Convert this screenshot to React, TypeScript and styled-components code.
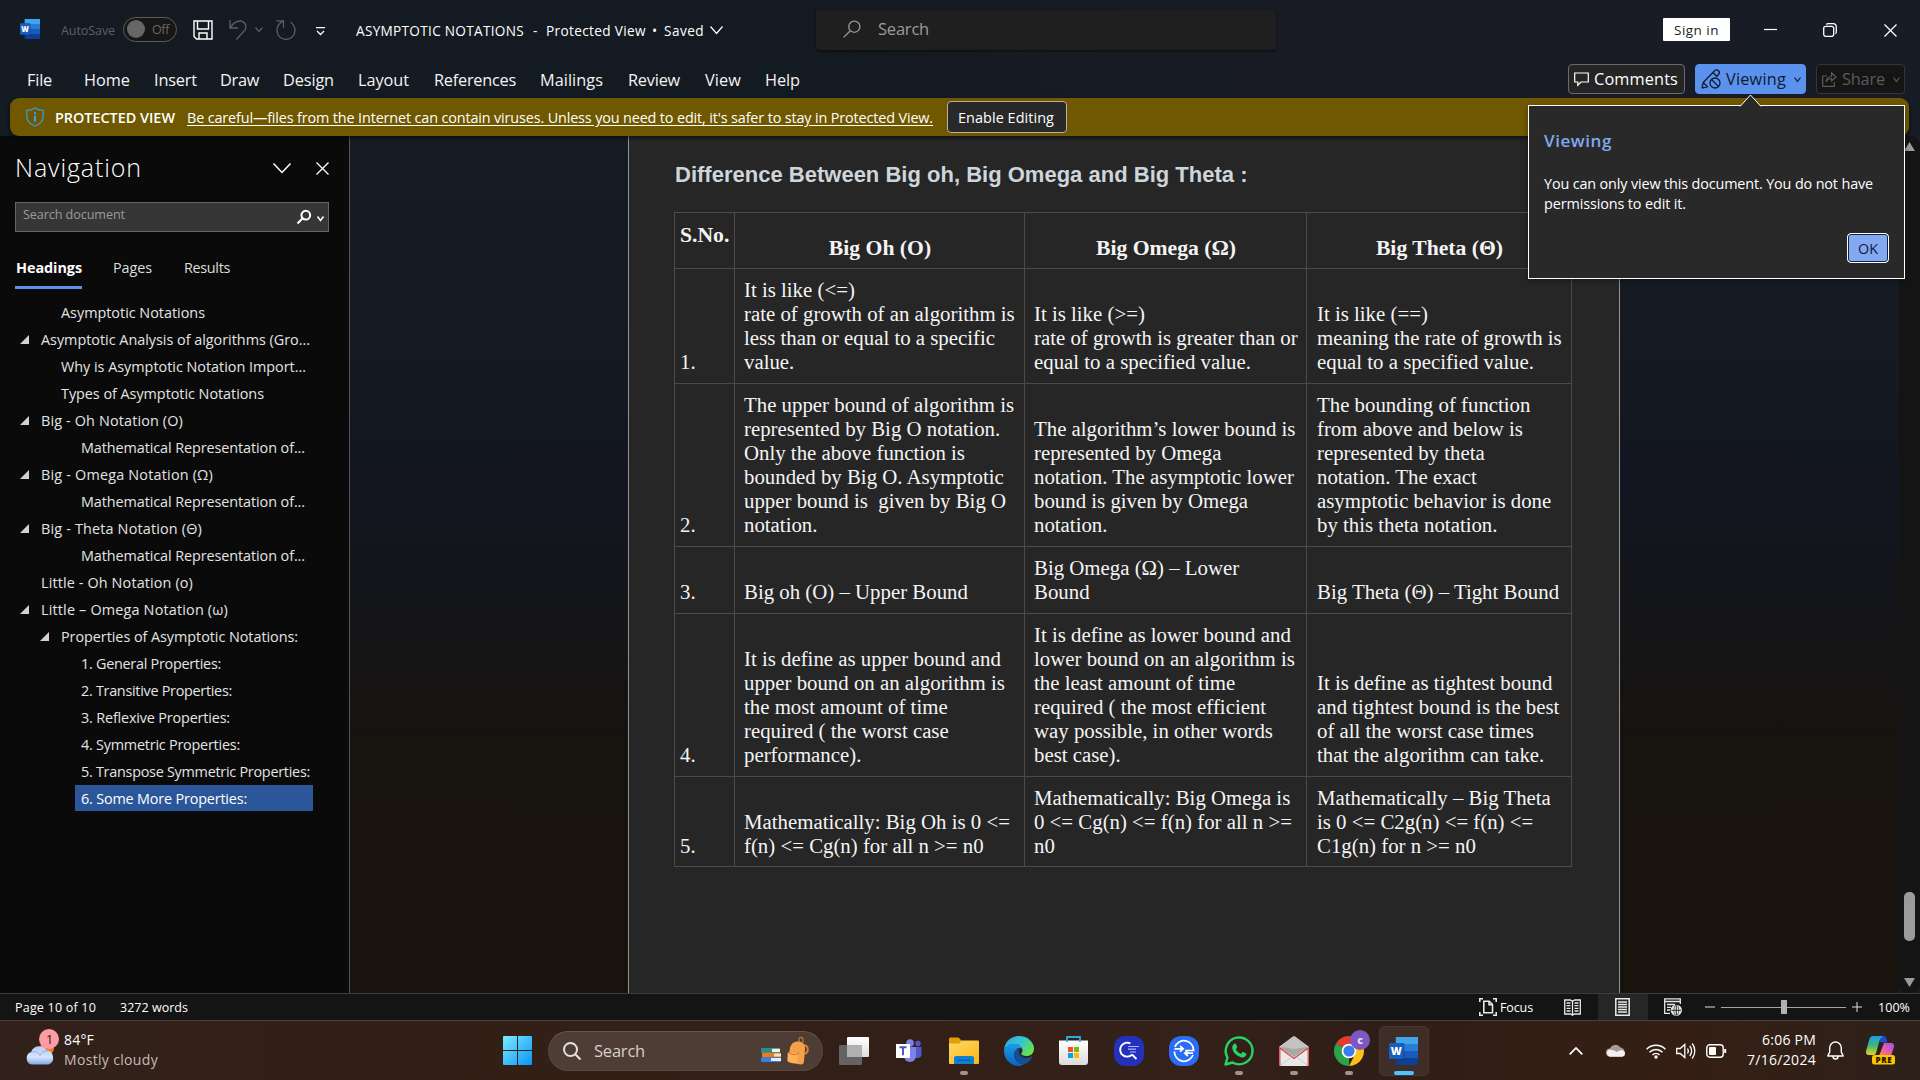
import React, { useLayoutEffect, useRef, useState } from "react";
import styled, { createGlobalStyle, css } from "styled-components";

const UI = `"Open Sans", "Noto Sans", sans-serif`;

const GlobalStyle = createGlobalStyle`
  * { box-sizing: border-box; }
  html, body { margin: 0; padding: 0; background: #14181f; overflow: hidden; }
  body { font-family: ${UI}; color: #fff; }
  svg { display: block; flex: none; overflow: visible; }
`;

/* ---------- text that tracks itself to a given measure ---------- */

const Measure = styled.span<{ $w: number }>`
  display: inline-block;
  flex: none;
  width: ${(p) => p.$w}px;
  white-space: pre;
  text-decoration: inherit;
  text-underline-offset: inherit;
`;

function Label({ w, children }: { w: number; children: string }) {
  const ref = useRef<HTMLSpanElement>(null);
  const [spacing, setSpacing] = useState(0);
  useLayoutEffect(() => {
    if (ref.current) {
      const natural = ref.current.getBoundingClientRect().width;
      setSpacing((w - natural) / children.length);
    }
  }, [w, children]);
  return (
    <Measure $w={w}>
      <span ref={ref} style={{ letterSpacing: spacing }}>{children}</span>
    </Measure>
  );
}

/* ---------- frame ---------- */

const Screen = styled.div`
  width: 1920px;
  height: 1080px;
  display: flex;
  flex-direction: column;
  overflow: hidden;
  background: linear-gradient(90deg, #141b22 0%, #141a22 40%, #191c25 70%, #181c26 100%);
`;

const TitleBar = styled.header`
  height: 58px;
  flex: none;
  display: flex;
  align-items: center;
  padding: 0 0 0 20px;
`;

const Before = styled.div<{ $gap: number; $down?: number }>`
  display: flex;
  align-items: center;
  flex: none;
  margin-left: ${(p) => p.$gap}px;
  padding-top: ${(p) => p.$down ?? 0}px;
`;

const AutoSave = styled.div`
  margin-left: 21px;
  padding-top: 2px;
  font-size: 12.5px;
  color: #5d6063;
  flex: none;
`;

const Toggle = styled.div`
  margin-left: 8px;
  width: 54px;
  height: 25px;
  border: 1px solid #5a5a5a;
  border-radius: 13px;
  background: #171717;
  display: flex;
  align-items: center;
  justify-content: space-between;
  padding: 0 7px 0 3px;
  font-size: 12.5px;
  color: #696969;
  flex: none;
  i { width: 18px; height: 18px; border-radius: 50%; background: #666; }
`;

const DocTitle = styled.div`
  display: flex;
  align-items: center;
  margin-left: 31px;
  padding-top: 2px;
  font-size: 13.6px;
  flex: none;
`;

const SearchBox = styled.div`
  margin-left: 93px;
  margin-top: 1px;
  width: 460px;
  height: 40px;
  border-radius: 4px;
  background: #1f1f1f;
  box-shadow: 0 1px 3px rgba(0, 0, 0, 0.6);
  display: flex;
  align-items: center;
  gap: 17px;
  padding: 0 0 2px 27px;
  font-size: 16.5px;
  color: #9b9b9b;
  flex: none;
`;

const SignIn = styled.div`
  margin-left: 387px;
  margin-top: 1px;
  width: 67px;
  height: 23px;
  background: #fff;
  border-radius: 1px;
  color: #222;
  display: flex;
  align-items: center;
  justify-content: center;
  font-size: 13.5px;
  line-height: 23px;
  padding-top: 1px;
  flex: none;
`;

const RibbonTabs = styled.nav`
  height: 40px;
  flex: none;
  display: flex;
  align-items: flex-start;
  padding-left: 27px;
`;

const Tab = styled.div<{ $w: number }>`
  width: ${(p) => p.$w}px;
  padding-top: 10px;
  line-height: 24px;
  font-size: 16.3px;
  color: #f4f4f4;
`;

const RibbonButtons = styled.div`
  margin-left: auto;
  margin-right: 15px;
  display: flex;
  gap: 10px;
  padding-top: 6px;
`;

const RibbonButton = styled.div<{ $w: number; $kind: "plain" | "active" | "off" }>`
  width: ${(p) => p.$w}px;
  height: 30px;
  border-radius: 4px;
  display: flex;
  align-items: center;
  font-size: 16.3px;
  padding: 0 0 0 5px;
  gap: 5px;
  ${(p) =>
    p.$kind === "plain"
      ? css`border: 1px solid #6b6b6b; background: #252525; color: #fff; font-weight: 500;`
      : p.$kind === "active"
        ? css`border: 1px solid #5b92ee; background: #5b92ee; color: #0e1a2e;`
        : css`border: 1px solid #353535; background: #151515; color: #5b5b5b;`}
`;

const Banner = styled.div`
  margin: 0 11px 0 10px;
  height: 38px;
  flex: none;
  border-radius: 9px;
  background: #6f5800;
  display: flex;
  align-items: center;
  padding-left: 16px;
  position: relative;
  box-shadow: 0 2px 4px rgba(0, 0, 0, 0.6);
  font-size: 14.4px;
`;

const BannerTitle = styled.div`
  margin-left: 11px;
  font-weight: 600;
  flex: none;
`;

const BannerLink = styled.div`
  margin-left: 12px;
  flex: none;
  text-decoration: underline;
  text-underline-offset: 2px;
`;

const EnableButton = styled.div`
  margin-left: 14px;
  width: 120px;
  height: 32px;
  border: 1px solid #b5b0a2;
  border-radius: 4px;
  background: #292929;
  display: flex;
  align-items: center;
  justify-content: center;
  padding-right: 2px;
  flex: none;
`;

/* ---------- body ---------- */

const Body = styled.main`
  height: 857px;
  flex: none;
  display: flex;
`;

const NavPane = styled.aside`
  width: 350px;
  background: #0a0a0a;
  border-right: 1px solid #55565a;
  flex: none;
`;

const NavHeader = styled.div`
  height: 66px;
  display: flex;
  padding: 0 0 2px 15px;
  align-items: center;
  font-size: 25px;
  font-weight: 300;
  line-height: 40px;
`;

const NavTitle = styled.div`
  padding-bottom: 2px;
`;

const NavSearch = styled.div`
  margin-left: 15px;
  width: 314px;
  height: 30px;
  border: 1px solid #666;
  background: #363636;
  display: flex;
  align-items: center;
  padding: 0 4px 0 7px;
  font-size: 12.6px;
  color: #9b9b9b;
`;

const NavSearchText = styled.div`
  flex: 1;
  padding-bottom: 6px;
`;

const NavTabs = styled.div`
  height: 67px;
  display: flex;
  gap: 31px;
  padding: 25px 0 0 15px;
  font-size: 14.4px;
  color: #ddd;
`;

const NavTab = styled.div<{ $on?: boolean }>`
  height: 32px;
  line-height: 22px;
  padding-left: 1px;
  ${(p) => p.$on && css`padding-right: 0; margin-right: -1px; font-weight: 700; color: #fff; border-bottom: 3px solid #5b92ee;`}
`;

const Tree = styled.div`
  display: flex;
  flex-direction: column;
`;

const TreeRow = styled.div<{ $x: number; $on?: boolean }>`
  height: 26px;
  margin: 0 0 1px ${(p) => p.$x - 6}px;
  padding-left: 6px;
  width: ${(p) => 319 - p.$x}px;
  line-height: 27px;
  font-size: 14.4px;
  color: ${(p) => (p.$on ? "#fff" : "#e4e4e4")};
  background: ${(p) => (p.$on ? "#2b579a" : "transparent")};
  position: relative;
`;

const Twisty = styled.i`
  position: absolute;
  left: -15px;
  top: 9px;
  width: 0;
  height: 0;
  border-left: 9px solid transparent;
  border-bottom: 9px solid #d2d2d2;
`;

const Desk = styled.section`
  width: 1549px;
  display: flex;
  background: linear-gradient(180deg, #161c24 0%, #141922 25%, #131620 42%, #141519 55%, #17130f 70%, #19130e 100%);
  padding-left: 278px;
`;

const Page = styled.article`
  width: 992px;
  background: #262626;
  border-left: 1px solid #929292;
  border-right: 1px solid #929292;
  padding: 26px 0 0 46px;
`;

const Heading = styled.h2`
  margin: 0;
  height: 50px;
  font: bold 22.02px/26px "Liberation Sans", Arial, sans-serif;
  color: #ced5db;
`;

const Table = styled.div`
  display: grid;
  grid-template-columns: 60px 290px 282px 265px;
  grid-template-rows: 56px 115px 163px 67px 163px 90px;
  width: 898px;
  margin-left: -1px;
  border-left: 1px solid #4b4b4b;
  border-top: 1px solid #4b4b4b;
  font: 20.84px/24px "Liberation Serif", "Times New Roman", serif;
  color: #f4f4f4;
`;

const Cell = styled.div<{ $pad?: number; $low?: boolean }>`
  border-right: 1px solid #4b4b4b;
  border-bottom: 1px solid #4b4b4b;
  display: flex;
  align-items: flex-end;
  white-space: pre;
  padding: 0 0 ${(p) => (p.$low ? 8 : 9)}px ${(p) => p.$pad ?? 5}px;
`;

const HeadCell = styled(Cell)<{ $first?: boolean }>`
  font-weight: bold;
  font-size: 21.67px;
  justify-content: ${(p) => (p.$first ? "flex-start" : "center")};
  padding: 0 0 ${(p) => (p.$first ? 21 : 8)}px ${(p) => (p.$first ? 5 : 1)}px;
`;

const ScrollBar = styled.div`
  width: 21px;
  background: #141414;
  border-radius: 9px;
  display: flex;
  flex-direction: column;
  align-items: center;
  padding: 6px 0 5px 0;
`;

const Thumb = styled.div`
  width: 11px;
  height: 49px;
  border-radius: 5px;
  background: #9b9b9b;
  margin: 741px 0 37px;
`;

/* ---------- callout ---------- */

const Callout = styled.div`
  position: absolute;
  left: 1528px;
  top: 105px;
  width: 377px;
  height: 174px;
  border: 1px solid #fff;
  background: #292929;
  padding: 22px 15px 15px 15px;
  box-shadow: 0 2px 5px rgba(0, 0, 0, 0.35);
  z-index: 5;
  display: flex;
  flex-direction: column;
`;

const CalloutTip = styled.svg`
  position: absolute;
  left: 210px;
  top: -12px;
`;

const CalloutTitle = styled.div`
  color: #82a8f0;
  font-size: 17px;
  font-weight: 600;
  line-height: 25px;
  height: 46px;
`;

const CalloutText = styled.div`
  font-size: 14.4px;
  line-height: 20px;
  display: flex;
  flex-direction: column;
`;

const OkButton = styled.div`
  margin: auto 0 0 auto;
  width: 42px;
  height: 30px;
  border: 1px solid #fff;
  border-radius: 4px;
  box-shadow: inset 0 0 0 1px #16233c;
  background: #82a9f2;
  color: #10203c;
  display: flex;
  align-items: center;
  justify-content: center;
  font-size: 14.4px;
`;

/* ---------- status bar ---------- */

const StatusBar = styled.footer`
  height: 28px;
  flex: none;
  background: #141414;
  border-top: 1px solid #3b3b3b;
  border-bottom: 1px solid #4a403b;
  display: flex;
  align-items: center;
  padding-left: 15px;
  font-size: 12.5px;
`;

const ViewMode = styled.div<{ $on?: boolean }>`
  width: 50px;
  height: 26px;
  flex: none;
  display: flex;
  align-items: center;
  justify-content: center;
  padding-right: 1px;
  background: ${(p) => (p.$on ? "#262626" : "transparent")};
`;

const ZoomTrack = styled.div`
  width: 125px;
  height: 14px;
  margin: 0 6px;
  flex: none;
  display: flex;
  align-items: center;
  background: linear-gradient(#a5a5a5, #a5a5a5) center / 100% 1px no-repeat;
  i { width: 6px; height: 14px; margin-left: 60px; background: #b0b0b0; }
`;

/* ---------- taskbar ---------- */

const TaskBar = styled.div`
  height: 59px;
  flex: none;
  background: linear-gradient(90deg, #32211a 0%, #321f16 30%, #33211a 62%, #2f1e17 72%, #351f14 88%, #2d211b 100%);
  display: flex;
  align-items: center;
`;

const Weather = styled.div`
  margin-left: 25px;
  display: flex;
  width: 478px;
  flex: none;
`;

const WeatherText = styled.div`
  margin: -1px 0 1px 9px;
  display: flex;
  flex-direction: column;
  font-size: 14px;
  line-height: 20px;
  div + div { color: #c4bbb6; }
`;

const TaskSearch = styled.div`
  margin-left: 16px;
  width: 275px;
  height: 40px;
  border-radius: 20px;
  background: #4e3d35;
  border: 1px solid #57473f;
  border-top-color: #66564e;
  display: flex;
  align-items: center;
  padding-left: 14px;
  font-size: 16.5px;
  color: #d6cfcb;
  flex: none;
`;

const Apps = styled.div`
  display: flex;
  gap: 5px;
  margin-left: 6px;
`;

const AppTile = styled.div<{ $active?: boolean }>`
  width: 50px;
  height: 50px;
  display: flex;
  align-items: center;
  justify-content: center;
  position: relative;
  border-radius: 5px;
  padding-right: 1px;
  ${(p) => p.$active && css`background: #3f2e27; border: 1px solid #47372f;`}
`;

const Running = styled.i<{ $active?: boolean }>`
  position: absolute;
  bottom: ${(p) => (p.$active ? 0 : 1)}px;
  left: 50%;
  transform: translateX(-50%);
  width: ${(p) => (p.$active ? 20 : 8)}px;
  height: 4px;
  border-radius: 2px;
  background: ${(p) => (p.$active ? "#4cc2ff" : "#a0948e")};
`;

const Tray = styled.div`
  display: flex;
  align-items: center;
  margin-left: 140px;
`;

const Clock = styled.div`
  margin: -1px 0 1px 19px;
  width: 70px;
  display: flex;
  flex-direction: column;
  align-items: flex-end;
  font-size: 14px;
  line-height: 20px;
`;

/* ---------- icons ---------- */

const Chevron = ({ w = 9, h = 5, color = "#fff", sw = 1.2 }: { w?: number; h?: number; color?: string; sw?: number }) => (
  <svg width={w} height={h} viewBox={`0 0 ${w} ${h}`} fill="none" stroke={color} strokeWidth={sw}>
    <path d={`M.5 .5 L${w / 2} ${h - 0.5} L${w - 0.5} .5`} />
  </svg>
);

const SvgLetter = styled.text`
  font-family: ${UI};
  font-weight: 800;
`;

const WordIcon = ({ size, h }: { size: number; h: number }) => (
  <svg width={size} height={h} viewBox="0 0 30 28" preserveAspectRatio="none">
    <path d="M7 0h23v7H7z" fill="#41a5ee" />
    <path d="M7 7h23v7H7z" fill="#2b7cd3" />
    <path d="M7 14h23v7H7z" fill="#185abd" />
    <path d="M7 21h23v7H7z" fill="#103f91" />
    <path d="M7 6h9v17H7z" fill="#0b2f6c" opacity=".45" />
    <rect x="0" y="6" width="15" height="16" rx="1" fill="#1a5cc0" />
    <SvgLetter x="7.5" y="18" fontSize="11" textAnchor="middle" fill="#fff">W</SvgLetter>
  </svg>
);

const SaveIcon = () => (
  <svg width="20" height="20" viewBox="0 0 20 20" fill="none" stroke="#fff" strokeWidth="1.4">
    <path d="M1 1h18v18H3.5L1 16.5z" />
    <path d="M4.5 1v8h11V1M6 19v-6h8v6" />
  </svg>
);

const UndoIcon = () => (
  <svg width="18" height="20" viewBox="0 0 18 20" fill="none" stroke="#5b6066" strokeWidth="1.3">
    <path d="M1 0v8h8M1.3 7.6C4 3 8 .8 12 1c4 .6 6 5 4.400 8.500L7.500 19.500" />
  </svg>
);

const RedoIcon = () => (
  <svg width="20" height="20" viewBox="0 0 20 20" fill="none" stroke="#5b6066" strokeWidth="1.3">
    <path d="M0.500 .8h7v7M7.300 1.200C3.500 3 1 6 1 10.500a9 9 0 0 0 18 0C19 7 17.500 4 14.500 2.200" />
  </svg>
);

const MoreIcon = () => (
  <svg width="9" height="9" viewBox="0 0 9 9" fill="none" stroke="#fff" strokeWidth="1.3">
    <path d="M0 .7h9M1 4l3.500 3.500L8 4" />
  </svg>
);

const Magnifier = ({ w, color, sw }: { w: number; color: string; sw: number }) => (
  <svg width={w} height={w} viewBox="0 0 18 18" fill="none" stroke={color} strokeWidth={sw}>
    <circle cx="11.300" cy="6.700" r="5.600" />
    <path d="M7.300 10.700L.6 17.400" />
  </svg>
);

const ShieldIcon = () => (
  <svg width="18" height="20" viewBox="0 0 18 20" fill="none" stroke="#4590b8" strokeWidth="1.5">
    <path d="M9 .9c2.500 1.800 5 2.400 8.200 2.500v6.200c0 4.600-3.200 7.500-8.200 9.500-5-2-8.200-4.900-8.200-9.500V3.400C4 3.300 6.500 2.700 9 .9z" />
    <path d="M9 8.500v6M9 5.200v2" stroke="#3f9be0" strokeWidth="2.200" />
  </svg>
);

const Minimize = () => (
  <svg width="13" height="14" viewBox="0 0 13 14"><path d="M0 7.500h13" stroke="#fff" strokeWidth="1.200" /></svg>
);
const Restore = () => (
  <svg width="14" height="14" viewBox="0 0 14 14" fill="none" stroke="#fff" strokeWidth="1.300">
    <rect x=".7" y="3.300" width="10" height="10" rx="2" />
    <path d="M3.300 1.500C3.800.9 4.400.7 5 .7h5a3.300 3.300 0 0 1 3.300 3.300v5c0 .8-.3 1.300-.9 1.700" />
  </svg>
);
const Cross = ({ s = 13 }: { s?: number }) => (
  <svg width={s} height={s} viewBox="0 0 13 13"><path d="M.5.5l12 12M12.500.5l-12 12" stroke="#fff" strokeWidth="1.300" /></svg>
);

const CommentIcon = () => (
  <svg width="15" height="14" viewBox="0 0 15 14" fill="none" stroke="#fff" strokeWidth="1.200">
    <path d="M.7 1h13.600v9H7l-3.200 3.200V10H.7z" />
  </svg>
);
const PencilOff = () => (
  <svg width="20" height="20" viewBox="0 0 20 20" fill="none" stroke="#0e1a2e" strokeWidth="1.300">
    <path d="M1 19l1.200-5.500L13.300 2c1-1.200 2.700-1.600 4-.5 1.300 1.200 1.200 3 .1 4.200l-2 2M1 19l6-1.500M2.200 13.500l4 4M12 3.500l3.600 3.800" />
    <circle cx="14" cy="14" r="5" />
    <path d="M10.500 10.500l7 7" />
  </svg>
);
const ShareIcon = () => (
  <svg width="15" height="15" viewBox="0 0 15 15" fill="none" stroke="#5b5b5b" strokeWidth="1.200">
    <path d="M5 4H.7v10.300h11.600V10M4 10c.5-4 3-5.500 5.500-5.500V.8L14 5l-4.500 4V6.500C7 6.500 5.200 7.800 4 10" />
  </svg>
);

const FocusIcon = () => (
  <svg width="18" height="18" viewBox="0 0 18 18" fill="none" stroke="#e8e8e8" strokeWidth="1.600">
    <path d="M.8 4V.8H4M14 .8h3.200V4M17.200 14v3.200H14M4 17.200H.8V14" />
    <path d="M4.800 3.300h5.500l3.200 3.200v8.200H4.800zM10 3.300v3.500h3.500" />
  </svg>
);
const ReadIcon = () => (
  <svg width="17" height="17" viewBox="0 0 17 17" fill="none" stroke="#e8e8e8" strokeWidth="1.300">
    <path d="M.7 1h5.500L8.500 2.200 10.800 1h5.500v14h-6L8.500 16.200 6.700 15h-6zM8.500 2.500V16M2.500 4h4M2.500 6.700h4M2.500 9.400h4M2.500 12h4M10.500 4h4M10.500 6.700h4M10.500 9.400h4M10.500 12h4" />
  </svg>
);
const PrintIcon = () => (
  <svg width="15" height="18" viewBox="0 0 15 18" fill="none" stroke="#e8e8e8" strokeWidth="1.500">
    <path d="M.8.8h13.400v16.400H.8zM3 4h9M3 6.500h9M3 9h9M3 11.500h9M3 14h9" />
  </svg>
);
const WebIcon = () => (
  <svg width="18" height="18" viewBox="0 0 18 18" fill="none" stroke="#e8e8e8" strokeWidth="1.300">
    <path d="M16.300 6V.8H.7v14.500H6M.7 3.500h15.600M3 6.500h8M3 9.300h4M3 12h3" />
    <circle cx="12.300" cy="12.300" r="5" fill="#e8e8e8" />
    <path d="M7.500 12.300h9.600M12.300 7.500v9.600" stroke="#141414" strokeWidth=".9" />
    <ellipse cx="12.300" cy="12.300" rx="2.400" ry="5" stroke="#141414" strokeWidth=".6" />
  </svg>
);

const WeatherIcon = () => (
  <svg width="30" height="40" viewBox="0 0 30 40">
    <defs>
      <linearGradient id="cl" x1="0" y1="0" x2="0" y2="1">
        <stop offset="0" stopColor="#b9cdf3" /><stop offset=".6" stopColor="#d5e3fb" /><stop offset="1" stopColor="#7fa6ea" />
      </linearGradient>
    </defs>
    <circle cx="22" cy="17" r="7" fill="#f57c1a" />
    <path d="M7 33.500a6.500 6.500 0 0 1-1-12.500A9 9 0 0 1 22 19.500a7.300 7.300 0 0 1 1.500 14z" fill="url(#cl)" />
    <path d="M6 21.500c4-2 8 0 9 3 1-3 4-5 8-4.500" stroke="#8eaeea" strokeWidth="1" fill="none" />
    <circle cx="24" cy="8" r="10" fill="#ff9ba4" />
    <text x="24.500" y="12.500" fontSize="12.500" textAnchor="middle" fill="#2a1414">1</text>
  </svg>
);

const StartIcon = () => (
  <svg width="29" height="29" viewBox="0 0 29 29">
    <defs>
      <linearGradient id="st" x1="0" y1="0" x2="1" y2="1">
        <stop offset="0" stopColor="#7aecff" /><stop offset="1" stopColor="#0a94f8" />
      </linearGradient>
    </defs>
    <path d="M0 1a1 1 0 0 1 1-1h13v14H0zM15 0h13a1 1 0 0 1 1 1v13H15zM0 15h14v14H1a1 1 0 0 1-1-1zM15 15h14v13a1 1 0 0 1-1 1H15z" fill="url(#st)" />
  </svg>
);

const BooksIcon = () => (
  <svg width="21" height="14" viewBox="0 0 21 14">
    <rect x="0" y="0" width="19" height="5" rx="1" fill="#2a8f8b" /><path d="M11 .8h8v3.200h-8z" fill="#eef3ea" />
    <rect x="1" y="4.800" width="19" height="4.600" rx="1" fill="#ec7a1c" /><path d="M13 5.500h7v3h-7z" fill="#f6e3c4" />
    <rect x="0" y="9.300" width="20" height="4.700" rx="1" fill="#3d7fe0" /><path d="M10 10h10v3H10z" fill="#e9eef6" />
  </svg>
);
const BackpackIcon = () => (
  <svg width="22" height="28" viewBox="0 0 22 28">
    <path d="M12 5V2.500a2 2 0 0 1 4 0V6" stroke="#c07030" strokeWidth="1.300" fill="none" />
    <path d="M17 8c5 1 5 8 0 9" stroke="#d9802f" strokeWidth="2" fill="none" />
    <path d="M3 11c1-5 5-7 9-6.500 4 .5 6 3 6 7l-1 13c0 2-1.500 3-3 3L4 26c-2-.3-3-1.500-3-3z" fill="#f6a04a" />
    <path d="M.8 15.500l9.500 1v9.500L2 25c-1.300-.3-1.700-1-1.600-2.500z" fill="#ffb35f" />
    <path d="M2 15.800c3 2.500 7 2.500 10-.3" stroke="#cf7428" strokeWidth="1" fill="none" />
  </svg>
);

const TaskViewIcon = () => (
  <svg width="30" height="28" viewBox="0 0 30 28">
    <defs>
      <linearGradient id="tv" x1="0" y1="0" x2="0" y2="1"><stop offset="0" stopColor="#fff" /><stop offset="1" stopColor="#dcdcdc" /></linearGradient>
    </defs>
    <rect x="0" y="8" width="23" height="20" rx="1" fill="#636363" />
    <rect x="8" y="0" width="22" height="20" rx="1" fill="url(#tv)" />
    <path d="M8 8h15v12H8z" fill="#b0b0b0" />
  </svg>
);
const TeamsIcon = () => (
  <svg width="27" height="24" viewBox="0 0 27 24">
    <circle cx="23" cy="4.500" r="2.700" fill="#5059c9" /><path d="M19 8h7.500v7a4 4 0 0 1-4 4H19z" fill="#5059c9" />
    <circle cx="15" cy="4" r="3.800" fill="#7b83eb" /><path d="M9 8h12v9a6 6 0 0 1-12 0z" fill="#7b83eb" />
    <rect x="1" y="5" width="14" height="14" fill="#fff" />
    <path d="M4.500 8.200h7M8 8.200v8" stroke="#4b53bc" strokeWidth="1.900" />
  </svg>
);
const FolderIcon = () => (
  <svg width="30" height="28" viewBox="0 0 30 28">
    <defs><linearGradient id="fo" x1="0" y1="0" x2="1" y2="1"><stop offset="0" stopColor="#ffd968" /><stop offset="1" stopColor="#fbb713" /></linearGradient></defs>
    <path d="M0 2a1.500 1.500 0 0 1 1.500-1.500H9.500L13 4H29v6H0z" fill="#e0a106" />
    <path d="M0 6.500h10L13 3.500h16a1 1 0 0 1 1 1V26a1 1 0 0 1-1 1H1a1 1 0 0 1-1-1z" fill="url(#fo)" />
    <path d="M5 27v-6a2 2 0 0 1 2-2h16a2 2 0 0 1 2 2v6z" fill="#0f7fd4" /><path d="M8 23.200h14" stroke="#0a5ca5" strokeWidth="1.300" />
  </svg>
);
const EdgeIcon = () => (
  <svg width="30" height="30" viewBox="0 0 30 30">
    <defs>
      <linearGradient id="e1" x1="0" y1="0" x2="1" y2=".6"><stop offset="0" stopColor="#2aa7e6" /><stop offset=".55" stopColor="#34c6d0" /><stop offset="1" stopColor="#67e052" /></linearGradient>
      <linearGradient id="e2" x1="0" y1="0" x2="0" y2="1"><stop offset="0" stopColor="#1a9fe8" /><stop offset="1" stopColor="#0a62c0" /></linearGradient>
    </defs>
    <path d="M0 14C.5 5.500 7.500 0 15 0c9 0 15 6.500 15 12.500 0 5-3.500 7.500-7.500 7.500-3.500 0-5.500-1.200-5.300-2.300.1-.7 1.300-1.300 1.300-3.500C18.500 11 15 8 10.500 8 5 8 1 11 0 14z" fill="url(#e1)" />
    <path d="M0 14.500C.8 10.500 5 7.700 10.500 7.700c4 0 7 2.300 7.800 5-3-2-8 .3-8 6 0 5 4 9.500 9.700 9.300C18 29.500 16 30 14.500 30 6 30-.3 22.500 0 14.500z" fill="url(#e2)" />
    <path d="M10.300 17c.3-2.700 2.300-5 5.700-5.200-1.700 1.500-2 6 1.500 8.500 3.500 2.300 7.500 1.700 10 .2.500-.3 1 .2.700.7C26 26 21.500 28.500 18 28c-4.500-.5-8.200-5.500-7.700-11z" fill="#124f94" />
  </svg>
);
const StoreIcon = () => (
  <svg width="29" height="29" viewBox="0 0 29 29">
    <defs><linearGradient id="so" x1="0" y1="0" x2="0" y2="1"><stop offset="0" stopColor="#fff" /><stop offset="1" stopColor="#dcdcdc" /></linearGradient></defs>
    <path d="M0 4.500h29V26a3 3 0 0 1-3 3H3a3 3 0 0 1-3-3z" fill="url(#so)" />
    <path d="M8 6V1h13v5" stroke="#27aee8" strokeWidth="1.800" fill="none" />
    <path d="M9 11h5v5H9z" fill="#f25022" /><path d="M15 11h5v5h-5z" fill="#7fba00" />
    <path d="M9 17h5v5H9z" fill="#00a4ef" /><path d="M15 17h5v5h-5z" fill="#ffb900" />
  </svg>
);
const QuickSearchIcon = () => (
  <svg width="30" height="30" viewBox="0 0 30 30" fill="none" stroke="#fff">
    <rect width="30" height="30" rx="11" fill="#2331bd" stroke="none" />
    <path d="M16.500 7.500a7 7 0 1 0 1.500 11.200M18 18.500l4.500 4.500" strokeWidth="1.900" />
    <path d="M14 10.500h11M14 13.200h8M16 16h6" strokeWidth="1.200" stroke="#aeb6ff" />
  </svg>
);
const SwitchIcon = () => (
  <svg width="30" height="30" viewBox="0 0 30 30" fill="none" stroke="#fff" strokeWidth="1.700">
    <rect width="30" height="30" rx="12" fill="#2a6cf6" stroke="none" />
    <path d="M6 11A9.600 9.600 0 0 1 24.600 14.500H16M24 19A9.600 9.600 0 0 1 5.400 15.500" />
    <path d="M5.500 12.800h8.500M11 10l3.200 2.800-3.200 2.800M24 17.200h-8M19 14.400L15.800 17.200 19 20" />
  </svg>
);
const WhatsAppIcon = () => (
  <svg width="30" height="30" viewBox="0 0 30 30">
    <path d="M1.500 28.500l2-7A13.400 13.400 0 1 1 8.500 26.500z" fill="none" stroke="#25d366" strokeWidth="2.400" strokeLinejoin="round" />
    <path d="M10 8c.6-.6 1.600-.5 2 .3l1 2.300c.2.500.1 1-.2 1.400l-1 1.200c1.200 2.200 2.800 3.700 5 4.700l1.300-1.400c.4-.4.900-.5 1.400-.3l2.300 1.100c.7.400.7 1.100.4 1.800-.8 1.900-2.700 2.700-4.600 2.300C12.500 20.200 9 16.700 8.300 12.300 8.100 10.500 8.700 9 10 8z" fill="#25d366" />
  </svg>
);
const MailIcon = () => (
  <svg width="30" height="30" viewBox="0 0 30 30">
    <path d="M0 11L13 1.200a3 3 0 0 1 4 0L30 11v18a1 1 0 0 1-1 1H1a1 1 0 0 1-1-1z" fill="#e9e9e9" />
    <path d="M1 11.500L13 2a3 3 0 0 1 4 0l12 9.500L15 21z" fill="#a8a8a8" /><path d="M2.500 11L13 2.500a3 3 0 0 1 4 0L27.500 11 15 13z" fill="#c3c3c3" />
    <path d="M.8 30V12L15 22.500 29.200 12v18" fill="none" stroke="#e04343" strokeWidth="1.300" />
    <path d="M2 29l10.500-8M28 29l-10.500-8" stroke="#c9c9c9" strokeWidth="1" />
  </svg>
);
const ChromeIcon = () => (
  <svg width="30" height="30" viewBox="0 0 30 30">
    <path d="M15 15L2 7.500A15 15 0 0 1 28 7.500z" fill="#e33b2e" />
    <path d="M15 15v.5L15 30A15 15 0 0 1 2 7.500z" fill="#2ba24c" />
    <path d="M15 8h13.300A15 15 0 0 1 15 30l6-11.500z" fill="#fbc116" />
    <circle cx="15" cy="15" r="7.300" fill="#fff" /><circle cx="15" cy="15" r="5.600" fill="#3b7ded" />
    <circle cx="26" cy="4" r="10" fill="#7e57c2" />
    <SvgLetter x="26" y="7.500" fontSize="10.500" textAnchor="middle" fill="#e6dcf5">c</SvgLetter>
  </svg>
);

const TrayUp = () => (
  <svg width="14" height="8" viewBox="0 0 14 8" fill="none" stroke="#fff" strokeWidth="1.700"><path d="M.7 7.300L7 1l6.300 6.300" /></svg>
);
const CloudIcon = () => (
  <svg width="20" height="13" viewBox="0 0 20 13">
    <path d="M4 12.500A4 4 0 0 1 4 4.500 6 6 0 0 1 14.500 3.500 4.800 4.800 0 0 1 16 12.500z" fill="#a79c96" />
    <path d="M4 12.800A3.800 3.800 0 0 1 3.500 5.500C7 6 9 7 11 8c2-1.600 4-2.200 6-1.500A3.300 3.300 0 0 1 16.500 12.800z" fill="#f4f2f1" />
  </svg>
);
const WifiIcon = () => (
  <svg width="20" height="16" viewBox="0 0 20 16" fill="none" stroke="#fff" strokeWidth="1.500">
    <path d="M.7 6.200a13 13 0 0 1 18.600 0M3.500 9.200a9 9 0 0 1 13 0M6.500 12a5 5 0 0 1 7 0" /><circle cx="10" cy="14" r="1.700" fill="#fff" stroke="none" />
  </svg>
);
const SpeakerIcon = () => (
  <svg width="20" height="18" viewBox="0 0 20 18" fill="none" stroke="#fff" strokeWidth="1.300">
    <path d="M.7 6.500h3.500L8.800 2.500v13L4.200 11.500H.7zM11.500 6.500c1 1.500 1 3.500 0 5M13.800 4c2.200 3 2.200 7 0 10M16.200 1.500c3.500 4.500 3.500 10.500 0 15" />
  </svg>
);
const BatteryIcon = () => (
  <svg width="21" height="14" viewBox="0 0 21 14" fill="none" stroke="#fff" strokeWidth="1.400">
    <rect x=".8" y=".8" width="16.400" height="12.400" rx="3" /><rect x="3" y="3" width="7" height="8" rx="1" fill="#fff" stroke="none" /><path d="M19.200 5v4" strokeWidth="2" />
  </svg>
);
const BellIcon = () => (
  <svg width="17" height="19" viewBox="0 0 17 19" fill="none" stroke="#fff" strokeWidth="1.400">
    <path d="M8.500 1a5.800 5.800 0 0 0-5.800 5.800V11L1 14.500v.5h15v-.5L14.300 11V6.800A5.800 5.800 0 0 0 8.500 1zM6 15.500a2.500 2.500 0 0 0 5 0" />
  </svg>
);
const CopilotIcon = () => (
  <svg width="29" height="29" viewBox="0 0 29 29">
    <defs>
      <linearGradient id="c1" x1="0" y1="0" x2="0" y2="1"><stop offset="0" stopColor="#1a9df0" /><stop offset=".5" stopColor="#3cb878" /><stop offset="1" stopColor="#e8d21c" /></linearGradient>
      <linearGradient id="c2" x1="1" y1="0" x2="0" y2="1"><stop offset="0" stopColor="#a24df0" /><stop offset=".6" stopColor="#ef5f9c" /><stop offset="1" stopColor="#f78b4a" /></linearGradient>
    </defs>
    <path d="M13 0h4c2 0 3 1 3.500 3l1 3.500h-7z" fill="#1b4fd0" />
    <path d="M7 0h10c-2 1-3 3-3.500 5L10 17c-.5 1.500-1.500 2-3 2H3c-2.500 0-3.500-2-3-4L3.500 3C4 1 5.500 0 7 0z" fill="url(#c1)" />
    <path d="M18 7h7c2.500 0 3.600 2 3 4l-3 9H13z" fill="url(#c2)" />
    <rect x="6" y="19" width="23" height="9.500" rx="2.500" fill="#ffc400" />
    <SvgLetter x="17.900" y="26.600" fontSize="8" letterSpacing=".6" textAnchor="middle" fill="#1c1600">PRE</SvgLetter>
  </svg>
);

/* ---------- data ---------- */

const ribbonTabs: [string, number, number][] = [
  ["File", 57, 25], ["Home", 70, 46], ["Insert", 66, 43], ["Draw", 63, 39], ["Design", 75, 51], ["Layout", 76, 51],
  ["References", 106, 82], ["Mailings", 88, 63], ["Review", 77, 52], ["View", 60, 36], ["Help", 60, 35],
];

const headings: { t: string; x: number; w: number; open?: boolean; on?: boolean }[] = [
  { t: "Asymptotic Notations", x: 61, w: 144 },
  { t: "Asymptotic Analysis of algorithms (Gro...", x: 41, w: 269, open: true },
  { t: "Why is Asymptotic Notation Import...", x: 61, w: 245 },
  { t: "Types of Asymptotic Notations", x: 61, w: 203 },
  { t: "Big - Oh Notation (O)", x: 41, w: 142, open: true },
  { t: "Mathematical Representation of...", x: 81, w: 224 },
  { t: "Big - Omega Notation (Ω)", x: 41, w: 172, open: true },
  { t: "Mathematical Representation of...", x: 81, w: 224 },
  { t: "Big - Theta Notation (Θ)", x: 41, w: 161, open: true },
  { t: "Mathematical Representation of...", x: 81, w: 224 },
  { t: "Little - Oh Notation (o)", x: 41, w: 152 },
  { t: "Little – Omega Notation (ω)", x: 41, w: 187, open: true },
  { t: "Properties of Asymptotic Notations:", x: 61, w: 237, open: true },
  { t: "1. General Properties:", x: 81, w: 140 },
  { t: "2. Transitive Properties:", x: 81, w: 151 },
  { t: "3. Reflexive Properties:", x: 81, w: 149 },
  { t: "4. Symmetric Properties:", x: 81, w: 159 },
  { t: "5. Transpose Symmetric Properties:", x: 81, w: 229 },
  { t: "6. Some More Properties:", x: 81, w: 166, on: true },
];

const rows: string[][] = [
  [
    "1.",
    "It is like (<=)\nrate of growth of an algorithm is\nless than or equal to a specific\nvalue.",
    "It is like (>=)\nrate of growth is greater than or\nequal to a specified value.",
    "It is like (==)\nmeaning the rate of growth is\nequal to a specified value.",
  ],
  [
    "2.",
    "The upper bound of algorithm is\nrepresented by Big O notation.\nOnly the above function is\nbounded by Big O. Asymptotic\nupper bound is  given by Big O\nnotation.",
    "The algorithm’s lower bound is\nrepresented by Omega\nnotation. The asymptotic lower\nbound is given by Omega\nnotation.",
    "The bounding of function\nfrom above and below is\nrepresented by theta\nnotation. The exact\nasymptotic behavior is done\nby this theta notation.",
  ],
  ["3.", "Big oh (O) – Upper Bound", "Big Omega (Ω) – Lower\nBound", "Big Theta (Θ) – Tight Bound"],
  [
    "4.",
    "It is define as upper bound and\nupper bound on an algorithm is\nthe most amount of time\nrequired ( the worst case\nperformance).",
    "It is define as lower bound and\nlower bound on an algorithm is\nthe least amount of time\nrequired ( the most efficient\nway possible, in other words\nbest case).",
    "It is define as tightest bound\nand tightest bound is the best\nof all the worst case times\nthat the algorithm can take.",
  ],
  [
    "5.",
    "Mathematically: Big Oh is 0 <=\nf(n) <= Cg(n) for all n >= n0",
    "Mathematically: Big Omega is\n0 <= Cg(n) <= f(n) for all n >=\nn0",
    "Mathematically – Big Theta\nis 0 <= C2g(n) <= f(n) <=\nC1g(n) for n >= n0",
  ],
];

const cellPad = [5, 9, 9, 10];

const apps: { icon: React.ReactNode; running?: boolean; active?: boolean }[] = [
  { icon: <TaskViewIcon /> },
  { icon: <TeamsIcon /> },
  { icon: <FolderIcon />, running: true },
  { icon: <EdgeIcon /> },
  { icon: <StoreIcon /> },
  { icon: <QuickSearchIcon /> },
  { icon: <SwitchIcon /> },
  { icon: <WhatsAppIcon />, running: true },
  { icon: <MailIcon />, running: true },
  { icon: <ChromeIcon />, running: true },
  { icon: <WordIcon size={29} h={28} />, running: true, active: true },
];

/* ---------- app ---------- */

export default function App() {
  return (
    <>
      <GlobalStyle />
      <Screen>
        <TitleBar>
          <WordIcon size={20} h={20} />
          <AutoSave><Label w={54}>AutoSave</Label></AutoSave>
          <Toggle><i /><Label w={17}>Off</Label></Toggle>
          <Before $gap={16} $down={2}><SaveIcon /></Before>
          <Before $gap={16} $down={2}><UndoIcon /></Before>
          <Before $gap={8}><Chevron w={8} h={5} color="#5b6066" /></Before>
          <Before $gap={13} $down={2}><RedoIcon /></Before>
          <Before $gap={20} $down={4}><MoreIcon /></Before>
          <DocTitle>
            <Label w={168}>ASYMPTOTIC NOTATIONS</Label>
            <Before $gap={9}><Label w={5}>-</Label></Before>
            <Before $gap={8}><Label w={100}>Protected View</Label></Before>
            <Before $gap={6}><Label w={6}>•</Label></Before>
            <Before $gap={6}><Label w={40}>Saved</Label></Before>
            <Before $gap={6}><Chevron w={13} h={8} /></Before>
          </DocTitle>
          <SearchBox>
            <Magnifier w={18} color="#9b9b9b" sw={1.3} />
            <Label w={51}>Search</Label>
          </SearchBox>
          <SignIn><Label w={45}>Sign in</Label></SignIn>
          <Before $gap={34}><Minimize /></Before>
          <Before $gap={46} $down={2}><Restore /></Before>
          <Before $gap={47} $down={2}><Cross /></Before>
        </TitleBar>

        <RibbonTabs>
          {ribbonTabs.map(([t, cell, w]) => (
            <Tab key={t} $w={cell}><Label w={w}>{t}</Label></Tab>
          ))}
          <RibbonButtons>
            <RibbonButton $w={117} $kind="plain"><CommentIcon /><Label w={84}>Comments</Label></RibbonButton>
            <RibbonButton $w={111} $kind="active">
              <PencilOff /><Label w={60}>Viewing</Label>
              <Before $gap={3}><Chevron w={7} h={5} color="#0e1a2e" /></Before>
            </RibbonButton>
            <RibbonButton $w={89} $kind="off">
              <ShareIcon /><Label w={43}>Share</Label>
              <Before $gap={3}><Chevron w={7} h={5} color="#5b5b5b" /></Before>
            </RibbonButton>
          </RibbonButtons>
        </RibbonTabs>

        <Banner>
          <ShieldIcon />
          <BannerTitle><Label w={120}>PROTECTED VIEW</Label></BannerTitle>
          <BannerLink>
            <Label w={746}>Be careful—files from the Internet can contain viruses. Unless you need to edit, it's safer to stay in Protected View.</Label>
          </BannerLink>
          <EnableButton><Label w={96}>Enable Editing</Label></EnableButton>
        </Banner>

        <Body>
          <NavPane>
            <NavHeader>
              <NavTitle><Label w={127}>Navigation</Label></NavTitle>
              <Before $gap={131}><Chevron w={18} h={10} sw={1.5} /></Before>
              <Before $gap={25}><Cross s={13} /></Before>
            </NavHeader>
            <NavSearch>
              <NavSearchText><Label w={102}>Search document</Label></NavSearchText>
              <Magnifier w={14} color="#fff" sw={2.6} />
              <Before $gap={6} $down={2}><Chevron w={7} h={5} sw={1.5} /></Before>
            </NavSearch>
            <NavTabs>
              <NavTab $on><Label w={66}>Headings</Label></NavTab>
              <NavTab><Label w={39}>Pages</Label></NavTab>
              <NavTab><Label w={46}>Results</Label></NavTab>
            </NavTabs>
            <Tree>
              {headings.map((h, i) => (
                <TreeRow key={i} $x={h.x} $on={h.on}>
                  {h.open && <Twisty />}
                  <Label w={h.w}>{h.t}</Label>
                </TreeRow>
              ))}
            </Tree>
          </NavPane>

          <Desk>
            <Page>
              <Heading>Difference Between Big oh, Big Omega and Big Theta :</Heading>
              <Table>
                <HeadCell $first>S.No.</HeadCell>
                <HeadCell>Big Oh (O)</HeadCell>
                <HeadCell>Big Omega (Ω)</HeadCell>
                <HeadCell>Big Theta (Θ)</HeadCell>
                {rows.flatMap((r, i) =>
                  r.map((c, j) => <Cell key={`${i}-${j}`} $pad={cellPad[j]} $low={i === 4}>{c}</Cell>)
                )}
              </Table>
            </Page>
          </Desk>

          <ScrollBar>
            <svg width="11" height="9" viewBox="0 0 11 9"><path d="M5.500 0L11 9H0z" fill="#9b9b9b" /></svg>
            <Thumb />
            <svg width="11" height="9" viewBox="0 0 11 9"><path d="M5.500 9L0 0h11z" fill="#9b9b9b" /></svg>
          </ScrollBar>
        </Body>

        <StatusBar>
          <Label w={81}>Page 10 of 10</Label>
          <Before $gap={24}><Label w={68}>3272 words</Label></Before>
          <Before $gap={1291}><FocusIcon /></Before>
          <Before $gap={3}><Label w={33}>Focus</Label></Before>
          <Before $gap={15}>
            <ViewMode><ReadIcon /></ViewMode>
            <ViewMode $on><PrintIcon /></ViewMode>
            <ViewMode><WebIcon /></ViewMode>
          </Before>
          <Before $gap={7}><svg width="10" height="10" viewBox="0 0 10 10"><path d="M0 5h10" stroke="#ddd" /></svg></Before>
          <ZoomTrack><i /></ZoomTrack>
          <svg width="10" height="10" viewBox="0 0 10 10"><path d="M0 5h10M5 0v10" stroke="#ddd" /></svg>
          <Before $gap={16}><Label w={32}>100%</Label></Before>
        </StatusBar>

        <TaskBar>
          <Weather>
            <WeatherIcon />
            <WeatherText>
              <div><Label w={30}>84°F</Label></div>
              <div><Label w={94}>Mostly cloudy</Label></div>
            </WeatherText>
          </Weather>
          <StartIcon />
          <TaskSearch>
            <svg width="18" height="18" viewBox="0 0 18 18" fill="none" stroke="#e6e0dd" strokeWidth="2">
              <circle cx="7.500" cy="7.500" r="6.500" /><path d="M12 12l5.500 5.500" />
            </svg>
            <Before $gap={13}><Label w={51}>Search</Label></Before>
            <Before $gap={116} $down={8}><BooksIcon /></Before>
            <Before $gap={5}><BackpackIcon /></Before>
          </TaskSearch>
          <Apps>
            {apps.map((a, i) => (
              <AppTile key={i} $active={a.active}>
                {a.icon}
                {a.running && <Running $active={a.active} />}
              </AppTile>
            ))}
          </Apps>
          <Tray>
            <TrayUp />
            <Before $gap={23}><CloudIcon /></Before>
            <Before $gap={20}><WifiIcon /></Before>
            <Before $gap={10}><SpeakerIcon /></Before>
            <Before $gap={10}><BatteryIcon /></Before>
            <Clock>
              <Label w={54}>6:06 PM</Label>
              <Label w={69}>7/16/2024</Label>
            </Clock>
            <Before $gap={11}><BellIcon /></Before>
            <Before $gap={22}><CopilotIcon /></Before>
          </Tray>
        </TaskBar>
      </Screen>

      <Callout>
        <CalloutTip width="23" height="13" viewBox="0 0 23 13">
          <path d="M1 12.500L11.500 1 22 12.500" fill="#292929" stroke="#fff" strokeWidth="1" />
          <path d="M1.800 13h19.400" stroke="#292929" strokeWidth="1.600" />
        </CalloutTip>
        <CalloutTitle><Label w={68}>Viewing</Label></CalloutTitle>
        <CalloutText>
          <Label w={329}>You can only view this document. You do not have</Label>
          <Label w={142}>permissions to edit it.</Label>
        </CalloutText>
        <OkButton><Label w={20}>OK</Label></OkButton>
      </Callout>
    </>
  );
}
